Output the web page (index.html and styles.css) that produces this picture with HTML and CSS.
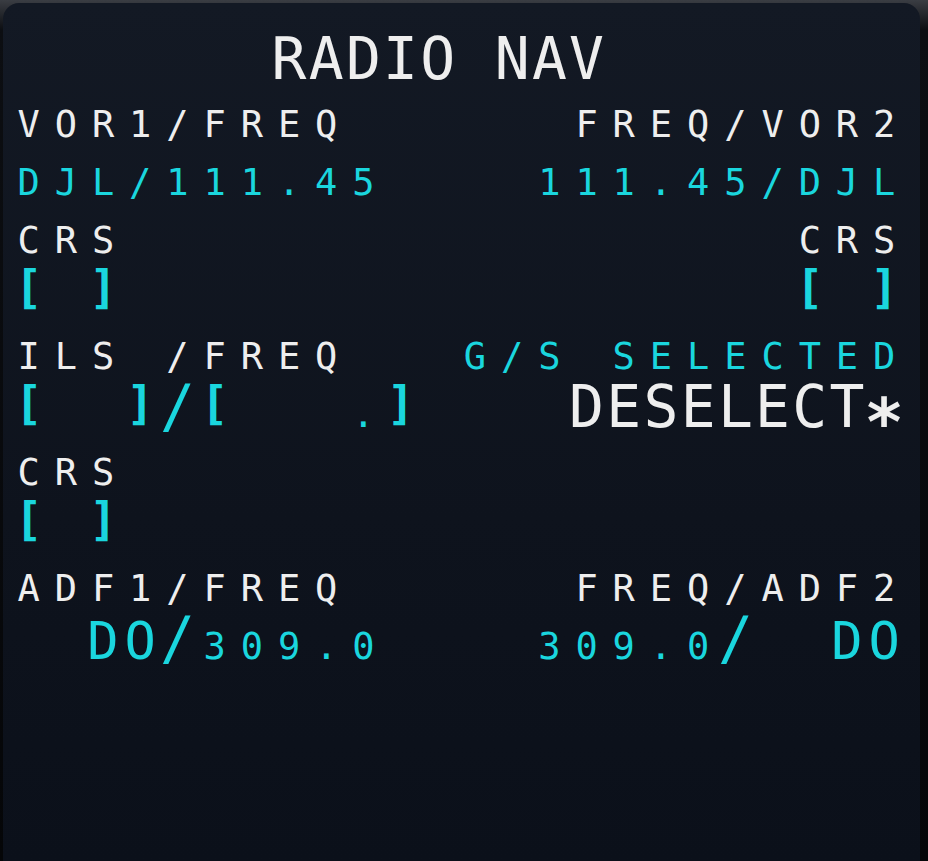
FILE: index.html
```html
<!DOCTYPE html>
<html lang="en">
<head>
    <meta charset="UTF-8">
    <meta name="viewport" content="width=device-width, initial-scale=1.0">
    <title>MCDU - Radio Nav</title>
    <link rel="stylesheet" href="styles.css">
</head>
<body>
    <div class="screen">
        <div class="line">
            <span class="white"><span class="big">       RADIO NAV</span></span>
        </div>

        <div class="line">
            <span class="white"><span class="small">VOR1/FREQ</span></span>
            <span class="white"><span class="small">FREQ/VOR2</span></span>
        </div>
        <div class="line">
            <span class="cyan"><span class="small">DJL/111.45</span></span>
            <span class="cyan"><span class="small">111.45/DJL</span></span>
        </div>

        <div class="line">
            <span class="white"><span class="small">CRS</span></span>
            <span class="white"><span class="small">CRS</span></span>
        </div>
        <div class="line">
            <span class="cyan"><span class="brk">[</span><span class="small"> </span><span class="brk">]</span></span>
            <span class="cyan"><span class="brk">[</span><span class="small"> </span><span class="brk">]</span></span>
        </div>

        <div class="line">
            <span class="white"><span class="small">ILS /FREQ</span></span>
            <span class="cyan"><span class="small">G/S SELECTED</span></span>
        </div>
        <div class="line">
            <span class="cyan"><span class="brk">[</span><span class="small">  </span><span class="brk">]</span><span class="big">/</span><span class="brk">[</span><span class="small">   .</span><span class="brk">]</span></span>
            <span class="white"><span class="big">DESELECT</span><span class="star">*</span></span>
        </div>

        <div class="line">
            <span class="white"><span class="small">CRS</span></span>
        </div>
        <div class="line">
            <span class="cyan"><span class="brk">[</span><span class="small"> </span><span class="brk">]</span></span>
        </div>

        <div class="line">
            <span class="white"><span class="small">ADF1/FREQ</span></span>
            <span class="white"><span class="small">FREQ/ADF2</span></span>
        </div>
        <div class="line">
            <span class="cyan"><span class="small">  </span><span class="ident">DO</span><span class="big">/</span><span class="small">309.0</span></span>
            <span class="cyan"><span class="small">309.0</span><span class="big">/  </span><span class="ident">DO</span></span>
        </div>

        <div class="line"></div>
        <div class="line"></div>
    </div>
</body>
</html>
```

FILE: styles.css
```css
body {
    margin: 0;
    height: 861px;
    overflow: hidden;
    background: linear-gradient(#3a3d43, #0c0e12 30px, #050608);
    font-family: "DejaVu Sans Mono", monospace;
}

/* display glass, 24 columns of 37.2px */
.screen {
    box-sizing: border-box;
    height: 858px;
    margin: 3px 8px 0 3px;
    padding: 35px 0 0 7px;
    border-radius: 16px 16px 0 0;
    background: linear-gradient(#131924, #0e131d 60%, #0b101a);
}

.line {
    display: flex;
    justify-content: space-between;
    align-items: baseline;
    width: 892.8px;
    height: 58px;
}

.line > span {
    font-size: 37px;
    line-height: 58px;
    white-space: pre;
}

.white {
    color: #eeeeee;
}

.cyan {
    color: #1ad6de;
}

/* every glyph takes one column, centred in it */
.small {
    font-size: 37px;
    letter-spacing: 14.93px;
    margin-left: 7.47px;
    margin-right: -7.47px;
}

.big {
    font-size: 58px;
    line-height: 0;
    letter-spacing: 2.28px;
    margin-left: 1.14px;
    margin-right: -1.14px;
}

.ident {
    font-size: 52px;
    line-height: 0;
    letter-spacing: 5.9px;
    margin-left: 2.95px;
    margin-right: -2.95px;
}

.brk {
    font-size: 47px;
    font-weight: bold;
    line-height: 0;
    letter-spacing: 8.91px;
    margin-left: 4.46px;
    margin-right: -4.46px;
    vertical-align: 8px;
}

.star {
    font-size: 66px;
    font-weight: bold;
    line-height: 0;
    letter-spacing: -2.53px;
    margin-left: -1.27px;
    margin-right: 1.27px;
    vertical-align: -18px;
}
```
